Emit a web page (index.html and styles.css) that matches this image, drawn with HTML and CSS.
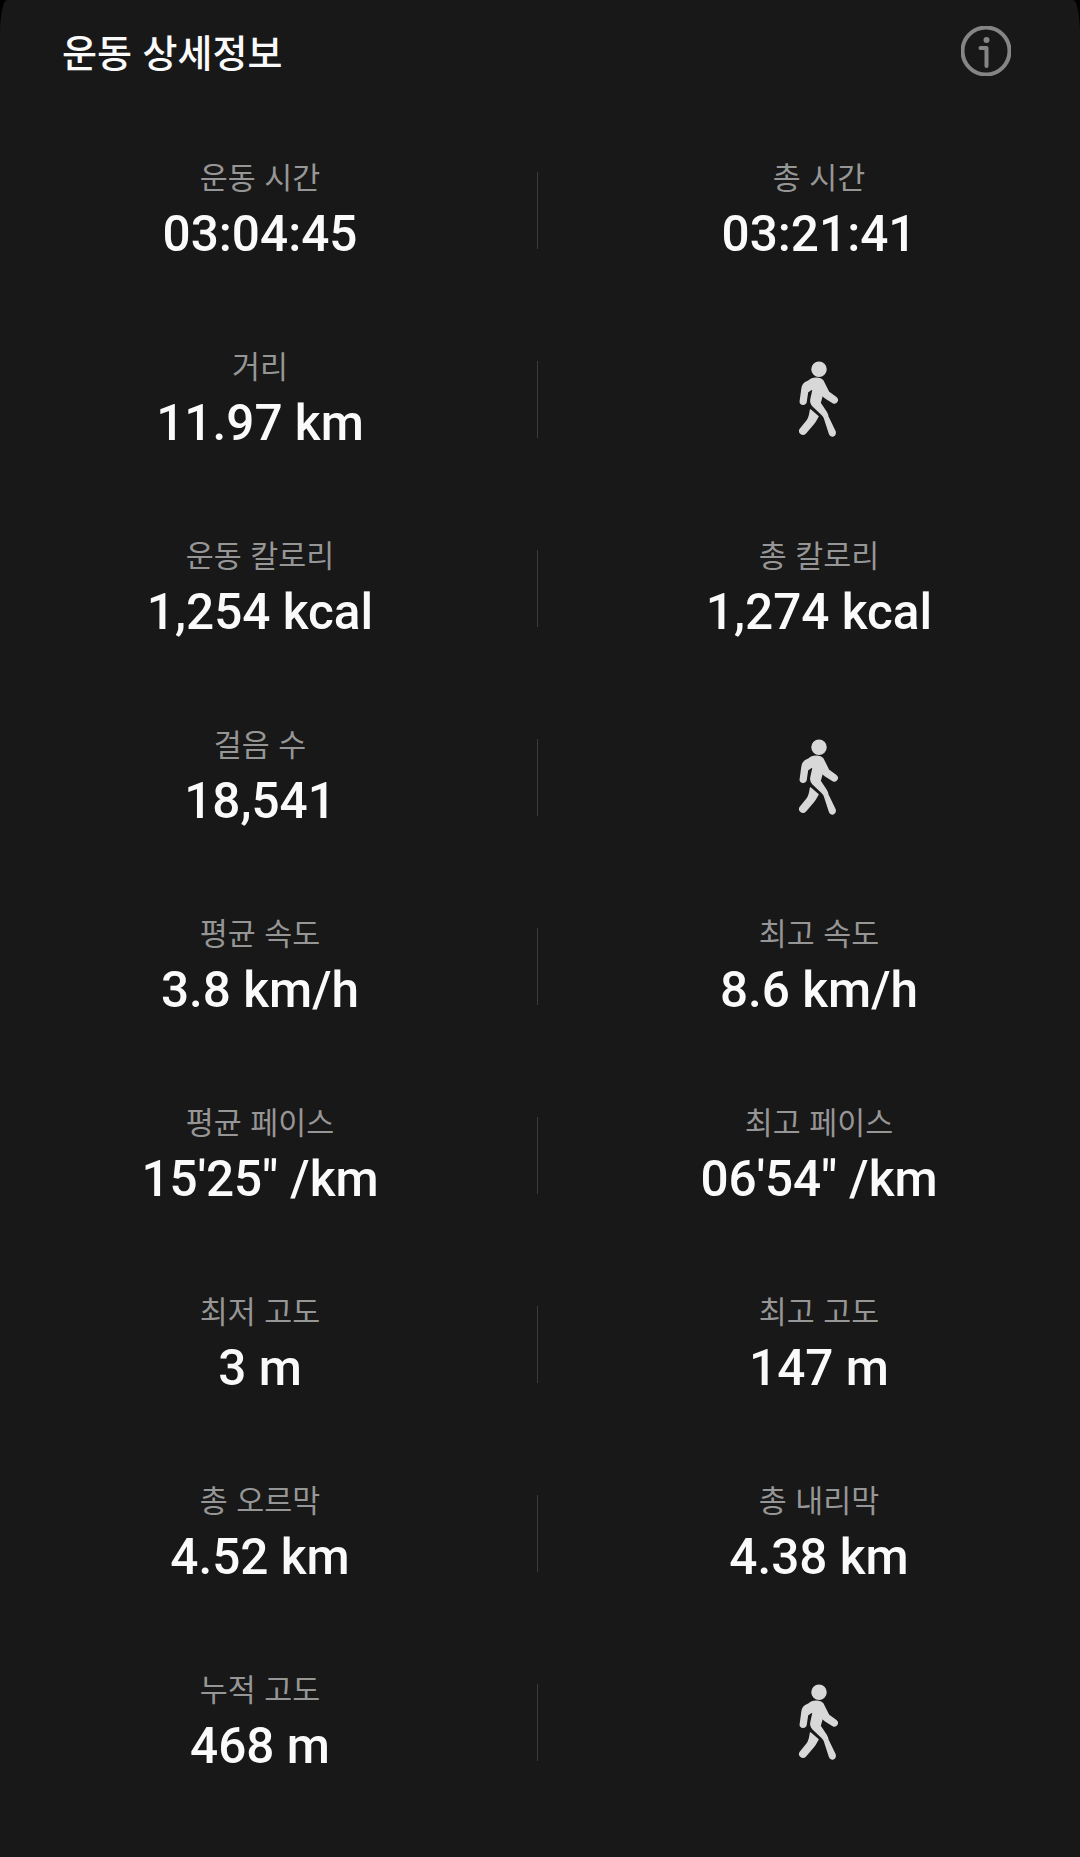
FILE: index.html
```html
<!DOCTYPE html>
<html lang="ko">
<head>
<meta charset="utf-8">
<title>운동 상세정보</title>
<link rel="stylesheet" href="styles.css">
</head>
<body>
<svg class="defs" width="0" height="0" aria-hidden="true">
  <symbol id="walker" viewBox="-1 -1 42 78">
    <circle cx="20" cy="7.300" r="7"/>
    <path d="M10 19C13 15.500 21 15 24 19L29.500 30L37 35.500C40 38 37 42 34 40.500L26 35.500C24.500 34.500 24 33.500 23.500 32L21 41L27 50C28 51.500 28.500 53 29 55L36 69.500C37 74 32 76 30.500 71.500L25.500 56C25 54.500 24 53.500 23 52.500L14 44C12 42 11.500 40 12 37.500L14.500 26L8.500 30L7 40C6.500 43 1 43 1.300 39.500L3 27C3.300 24.500 4.500 22 6 21Z"/>
    <path d="M11.500 48L19 54.500L17 58C16.500 59 16 60 15 61L6.500 71C3.500 74 -1 70.500 1.500 67L8 59C10 56.500 11 52 11.500 48Z"/>
  </symbol>
</svg>
<main class="panel">
  <header class="head">
    <h1 class="title">운동 상세정보</h1>
    <svg class="info" viewBox="0 0 50 50" aria-hidden="true">
      <circle class="info-ring" cx="25" cy="25" r="23.500"/>
      <circle class="info-dot" cx="25.500" cy="14" r="3"/>
      <path class="info-stem" d="M19.500 22H25.500V40"/>
    </svg>
  </header>
  <section class="stats">
    <div class="row">
      <div class="cell"><div class="label">운동 시간</div><div class="value">03:04:45</div></div>
      <div class="sep"></div>
      <div class="cell"><div class="label">총 시간</div><div class="value">03:21:41</div></div>
    </div>
    <div class="row">
      <div class="cell"><div class="label">거리</div><div class="value">11.97 km</div></div>
      <div class="sep"></div>
      <div class="icon-cell"><svg class="walker"><use href="#walker"/></svg></div>
    </div>
    <div class="row">
      <div class="cell"><div class="label">운동 칼로리</div><div class="value">1,254 kcal</div></div>
      <div class="sep"></div>
      <div class="cell"><div class="label">총 칼로리</div><div class="value">1,274 kcal</div></div>
    </div>
    <div class="row">
      <div class="cell"><div class="label">걸음 수</div><div class="value">18,541</div></div>
      <div class="sep"></div>
      <div class="icon-cell"><svg class="walker"><use href="#walker"/></svg></div>
    </div>
    <div class="row">
      <div class="cell"><div class="label">평균 속도</div><div class="value">3.8 km/h</div></div>
      <div class="sep"></div>
      <div class="cell"><div class="label">최고 속도</div><div class="value">8.6 km/h</div></div>
    </div>
    <div class="row">
      <div class="cell"><div class="label">평균 페이스</div><div class="value">15'25" /km</div></div>
      <div class="sep"></div>
      <div class="cell"><div class="label">최고 페이스</div><div class="value">06'54" /km</div></div>
    </div>
    <div class="row">
      <div class="cell"><div class="label">최저 고도</div><div class="value">3 m</div></div>
      <div class="sep"></div>
      <div class="cell"><div class="label">최고 고도</div><div class="value">147 m</div></div>
    </div>
    <div class="row">
      <div class="cell"><div class="label">총 오르막</div><div class="value">4.52 km</div></div>
      <div class="sep"></div>
      <div class="cell"><div class="label">총 내리막</div><div class="value">4.38 km</div></div>
    </div>
    <div class="row">
      <div class="cell"><div class="label">누적 고도</div><div class="value">468 m</div></div>
      <div class="sep"></div>
      <div class="icon-cell"><svg class="walker"><use href="#walker"/></svg></div>
    </div>
  </section>
</main>
</body>
</html>
```
FILE: styles.css
```css
* { box-sizing: border-box; }
html, body { margin: 0; padding: 0; background: #000; }
body { width: 1080px; height: 1857px; overflow: hidden; }
.defs { position: absolute; }
.panel {
  width: 1080px;
  height: 1857px;
  background: #181818;
  border-radius: 7px 7px 0 0 / 34px 34px 0 0;
  font-family: Roboto, "Noto Sans CJK KR", sans-serif;
}
.head {
  display: flex;
  align-items: center;
  justify-content: space-between;
  height: 102px;
  padding: 0 69px 0 62px;
}
.title {
  margin: 0 0 2px;
  font-family: "Noto Sans CJK KR", sans-serif;
  font-size: 38px;
  font-weight: 500;
  color: #fafafa;
}
.info { width: 50px; height: 50px; }
.info-ring, .info-stem { fill: none; stroke: #858585; stroke-width: 4; }
.info-stem { stroke-linecap: round; stroke-linejoin: round; }
.info-dot { fill: #858585; }
.stats { padding-top: 14px; }
.row {
  display: grid;
  grid-template-columns: 520px 2px 526px;
  column-gap: 17px;
  align-items: center;
  height: 189px;
}
.cell {
  display: flex;
  flex-direction: column;
  align-items: center;
  justify-content: center;
  padding-bottom: 2px;
}
.icon-cell { display: flex; justify-content: center; }
.sep { width: 1px; height: 77px; background: #3c3c3c; justify-self: start; }
.label {
  font-family: "Noto Sans CJK KR", sans-serif;
  font-size: 30.400px;
  line-height: 50px;
  color: #969696;
}
.value {
  font-size: 49.500px;
  font-weight: 500;
  line-height: 67px;
  color: #fafafa;
  white-space: nowrap;
}
.walker { width: 42px; height: 78px; fill: #d8d8d8; stroke: #d8d8d8; stroke-width: 1.500; stroke-linejoin: round; }
```
